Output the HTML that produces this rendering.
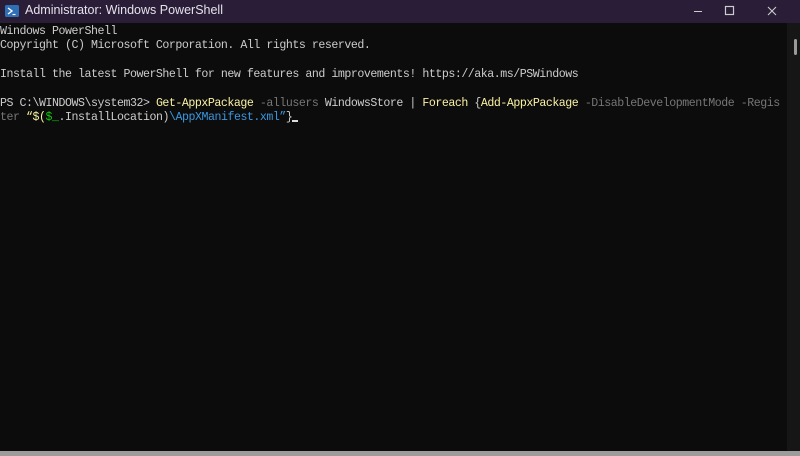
<!DOCTYPE html>
<html><head><meta charset="utf-8"><style>
html,body{margin:0;padding:0;width:800px;height:456px;overflow:hidden;background:#0c0c0c;}
.tb{position:absolute;left:0;top:0;width:800px;height:23px;background:#2a1d38;}
.tt{position:absolute;left:25px;top:3px;font:12.5px "Liberation Sans",sans-serif;color:#e6e2ea;}
.term{position:absolute;left:0;top:24px;width:787px;height:428px;background:#0c0c0c;}
.sb{position:absolute;left:787px;top:23px;width:13px;height:429px;background:#161616;}
.thumb{position:absolute;left:794px;top:39px;width:3px;height:16px;background:#9a9a9a;border-radius:2px;}
.bot{position:absolute;left:0;top:451px;width:800px;height:5px;background:#9c9c9c;}
pre{margin:0;position:absolute;left:0;top:25px;font:11.6px/14.4px "Liberation Mono",monospace;letter-spacing:-0.46px;color:#cccccc;white-space:pre;}
.y{color:#f9f1a5}.g{color:#767676}.gr{color:#16c60c}.b{color:#3a96dd}
.cur{display:inline-block;width:6px;height:2px;background:#ddd;vertical-align:-2px;}
</style></head><body>
<div class="tb">
<svg style="position:absolute;left:5px;top:5px" width="14" height="12" viewBox="0 0 14 12"><rect width="14" height="12" rx="1.5" fill="#2f6fb6"/><path d="M3 3l4 3-4 3" stroke="#fff" stroke-width="1.4" fill="none"/><path d="M7.5 9.5h3" stroke="#fff" stroke-width="1.2"/></svg>
<div class="tt">Administrator: Windows PowerShell</div>
<svg style="position:absolute;left:690px;top:3px" width="110" height="16"><path d="M4 8.5h8" stroke="#ccc" stroke-width="1"/><rect x="35.5" y="3.5" width="8" height="8" stroke="#ccc" fill="none" stroke-width="1.2"/><path d="M78 4l8 8M86 4l-8 8" stroke="#ccc" stroke-width="1.1"/></svg>
</div>
<div class="term"></div>
<div class="sb"></div><div class="thumb"></div>
<pre>Windows PowerShell
Copyright (C) Microsoft Corporation. All rights reserved.

Install the latest PowerShell for new features and improvements! https://aka.ms/PSWindows

PS C:\WINDOWS\system32&gt; <span class="y">Get-AppxPackage</span> <span class="g">-allusers</span> WindowsStore | <span class="y">Foreach</span> {<span class="y">Add-AppxPackage</span> <span class="g">-DisableDevelopmentMode</span> <span class="g">-Regis</span>
<span class="g">ter</span> <span class="y">“$(</span><span class="gr">$_</span>.InstallLocation)<span class="b">\AppXManifest.xml”</span>}<span class="cur"></span></pre>
<div class="bot"></div>
</body></html>
